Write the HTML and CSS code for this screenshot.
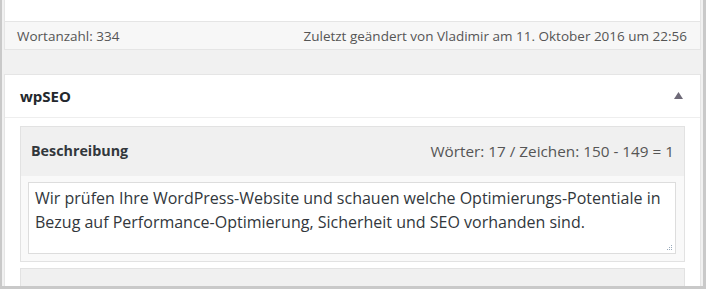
FILE: index.html
```html
<!DOCTYPE html>
<html lang="de">
<head>
<meta charset="utf-8">
<title>wpSEO</title>
<link rel="stylesheet" href="styles.css">
</head>
<body>
<div class="frame">
  <div class="editor">
    <div class="editor-top"></div>
    <div class="status">
      <span class="wordcount">Wortanzahl: 334</span>
      <span class="lastedit">Zuletzt geändert von Vladimir am 11. Oktober 2016 um 22:56</span>
    </div>
  </div>
  <div class="postbox">
    <div class="postbox-head">
      <h2 class="postbox-title">wpSEO</h2>
      <svg class="toggle" width="9" height="7" viewBox="0 0 9 7"><polygon points="4.5,0 9,7 0,7" fill="#6e6a78"/></svg>
    </div>
    <div class="inside">
      <div class="field">
        <div class="field-head">
          <span class="field-label">Beschreibung</span>
          <span class="field-count">Wörter: 17 / Zeichen: 150 - 149 = 1</span>
        </div>
        <div class="field-body">
          <div class="textarea">Wir prüfen Ihre WordPress-Website und schauen welche Optimierungs-Potentiale in Bezug auf Performance-Optimierung, Sicherheit und SEO vorhanden sind.
            <svg class="grip" width="6" height="6" viewBox="0 0 6 6"><rect x="4" y="0" width="1" height="1" fill="#9ab"/><rect x="2" y="2" width="1" height="1" fill="#9ab"/><rect x="4" y="2" width="1" height="1" fill="#9ab"/><rect x="0" y="4" width="1" height="1" fill="#9ab"/><rect x="2" y="4" width="1" height="1" fill="#9ab"/><rect x="4" y="4" width="1" height="1" fill="#9ab"/></svg>
          </div>
        </div>
      </div>
      <div class="field field-next"></div>
    </div>
  </div>
</div>
</body>
</html>
```

FILE: styles.css
```css
* { box-sizing: border-box; }
html, body { margin: 0; padding: 0; }
body {
  font-family: "Open Sans", "Noto Sans", sans-serif;
  color: #444;
  background: #fff;
}
.frame {
  width: 706px;
  height: 289px;
  overflow: hidden;
  background: #f1f1f1;
  border-left: 2px solid #c9c9c9;
  border-right: 3px solid #c9c9c9;
  border-bottom: 3px solid #c9c9c9;
  padding: 0 2px;
}
.editor {
  background: #fff;
  border: 1px solid #e5e5e5;
  border-top: none;
}
.editor-top { height: 21px; }
.status {
  height: 28px;
  border-top: 1px solid #e5e5e5;
  background: #f7f7f7;
  display: flex;
  justify-content: space-between;
  align-items: center;
  padding: 0 13px 0 12px;
  font-size: 13.5px;
  color: #555;
}
.postbox {
  margin-top: 24px;
  background: #fff;
  border: 1px solid #e5e5e5;
  height: 300px;
}
.postbox-head {
  height: 43px;
  border-bottom: 1px solid #eee;
  display: flex;
  align-items: center;
  justify-content: space-between;
  padding: 0 17px 0 15px;
}
.postbox-title {
  margin: 0;
  font-size: 15px;
  font-weight: 700;
  color: #23282d;
}
.toggle { display: block; margin-top: -2px; }
.inside { padding: 8px 15px 0 15px; }
.field {
  border: 1px solid #e2e2e2;
  background: #f9f9f9;
}
.field-head {
  height: 49px;
  background: #f0f0f0;
  display: flex;
  justify-content: space-between;
  align-items: center;
  padding: 0 10px 2px 10px;
}
.field-label {
  font-size: 14.3px;
  font-weight: 700;
  color: #32373c;
}
.field-count {
  font-size: 15.3px;
  color: #555;
}
.field-body { padding: 6px 8px 7px 7px; }
.textarea {
  position: relative;
  height: 72px;
  background: #fff;
  border: 1px solid #ddd;
  padding: 3px 6px;
  font-size: 16px;
  line-height: 24px;
  color: #32373c;
}
.grip { position: absolute; right: 2px; bottom: 2px; }
.field-next {
  margin-top: 6px;
  height: 40px;
  background: #f0f0f0;
}
```
